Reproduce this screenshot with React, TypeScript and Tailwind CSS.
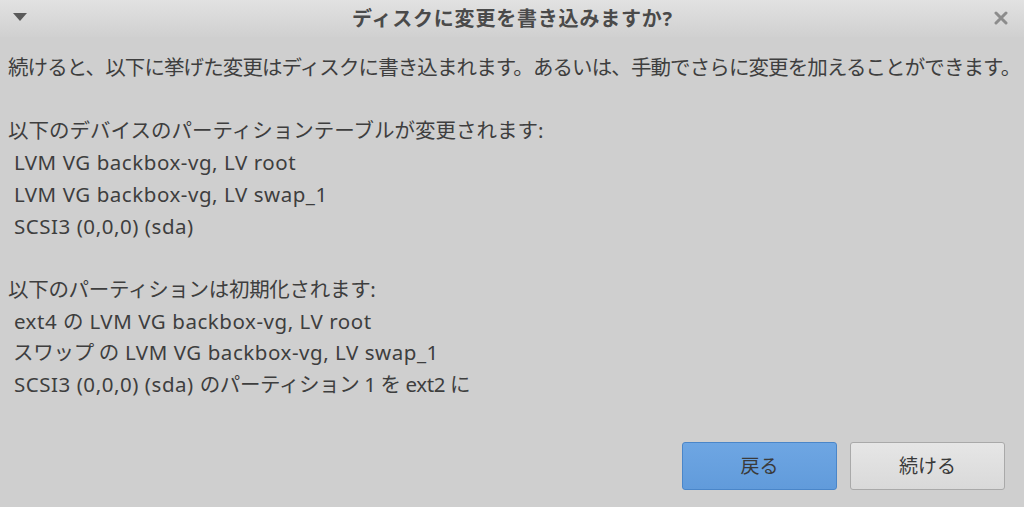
import React from "react";

const font = {
  fontFamily: '"Noto Sans", "Noto Sans CJK JP", sans-serif',
};

// latin runs render a bit wider in the original
const L: React.FC<{ children: React.ReactNode }> = ({ children }) => (
  <span className="tracking-[0.55px]">{children}</span>
);

const App: React.FC = () => {
  return (
    <div
      className="w-[1024px] h-[507px] bg-[#cfcfcf] text-[#3e3e3e] flex flex-col overflow-hidden"
      style={font}
    >
      {/* title bar */}
      <div className="h-[37px] shrink-0 flex items-center px-[13px] bg-gradient-to-b from-[#e2e2e2] to-[#d0d0d0]">
        <svg width="14" height="9" viewBox="0 0 14 9" className="mt-[-2px]">
          <path d="M0 0 H14 L7 8 Z" fill="#5a5a5a" />
        </svg>
        <div className="flex-1 text-center text-[20px] font-bold text-[#4a4a4a] pl-[4px] tracking-[0.8px]">
          ディスクに変更を書き込みますか?
        </div>
        <svg width="14" height="14" viewBox="0 0 14 14" className="mr-[3px] mt-[-2px]">
          <path
            d="M2 2 L12 12 M12 2 L2 12"
            stroke="#8c8c8c"
            strokeWidth="3"
            strokeLinecap="round"
          />
        </svg>
      </div>

      {/* body */}
      <div className="flex-1 px-[8px] pt-[15px] text-[20.5px] leading-[31.7px] whitespace-pre">
        <p className="tracking-[-0.9px]">
          続けると、以下に挙げた変更はディスクに書き込まれます。あるいは、手動でさらに変更を加えることができます。
        </p>
        <p>&nbsp;</p>
        <p>以下のデバイスのパーティションテーブルが変更されます:</p>
        <p>
          <L> LVM VG backbox-vg, LV root</L>
        </p>
        <p>
          <L> LVM VG backbox-vg, LV swap_1</L>
        </p>
        <p>
          <L> SCSI3 (0,0,0) (sda)</L>
        </p>
        <p>&nbsp;</p>
        <p className="tracking-[-0.3px]">以下のパーティションは初期化されます:</p>
        <p>
          <L> ext4 </L>の<L> LVM VG backbox-vg, LV root</L>
        </p>
        <p className="tracking-[-0.3px]">
          {" "}スワップ の<L> LVM VG backbox-vg, LV swap_1</L>
        </p>
        <p className="tracking-[-0.4px]">
          <L> SCSI3 (0,0,0) (sda) </L>のパーティション 1 を ext2 に
        </p>
      </div>

      {/* buttons */}
      <div className="flex justify-end gap-[13px] pr-[19px] pb-[17px]">
        <button className="w-[155px] h-[48px] rounded-[3px] border border-[#4a86c9] bg-gradient-to-b from-[#6ea6e3] to-[#619bdb] text-[19px] text-[#3a3a3a]">
          戻る
        </button>
        <button className="w-[155px] h-[48px] rounded-[3px] border border-[#a9a9a9] bg-gradient-to-b from-[#e6e6e6] to-[#d9d9d9] text-[19px] text-[#3a3a3a]">
          続ける
        </button>
      </div>
    </div>
  );
};

export default App;
